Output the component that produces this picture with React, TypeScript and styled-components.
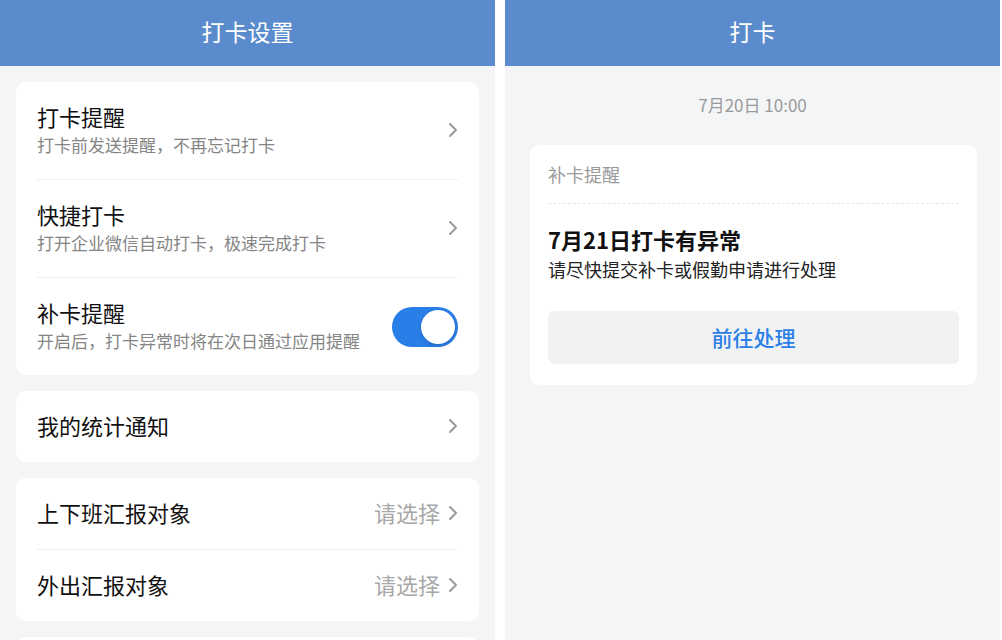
import styled, { createGlobalStyle } from "styled-components";

const GlobalStyle = createGlobalStyle`
  html, body {
    margin: 0;
    padding: 0;
    background: #ffffff;
  }
  body {
    font-family: "Noto Sans CJK SC", "Noto Sans", sans-serif;
    -webkit-font-smoothing: antialiased;
  }
`;

const Page = styled.div`
  display: flex;
  gap: 10px;
  width: 1002px;
  height: 640px;
  overflow: hidden;
`;

const Screen = styled.div`
  width: 495px;
  height: 640px;
  background: #f4f5f7;
  display: flex;
  flex-direction: column;
  overflow: hidden;
`;

const NavBar = styled.div`
  height: 66px;
  box-sizing: border-box;
  padding-bottom: 4px;
  flex-shrink: 0;
  background: #5a8bcc;
  color: #ffffff;
  font-size: 23px;
  display: flex;
  align-items: center;
  justify-content: center;
`;

const SettingsBody = styled.div`
  padding: 16px 16px 0;
  display: flex;
  flex-direction: column;
  gap: 16px;
`;

const Card = styled.div`
  background: #ffffff;
  border-radius: 10px;
  padding: 0 21px;
  flex-shrink: 0;
`;

// text in Noto CJK sits a little low, so the row keeps 4px spare at the bottom
const Row = styled.div<{ h: number }>`
  height: ${(p) => p.h - 4}px;
  padding-bottom: 4px;
  display: flex;
  align-items: center;
  justify-content: space-between;
  & + & {
    border-top: 1px solid #eeeff1;
  }
`;

const RowText = styled.div`
  display: flex;
  flex-direction: column;
  gap: 4px;
`;

const RowTitle = styled.div`
  font-size: 22px;
  color: #111111;
  line-height: 28px;
`;

const RowSub = styled.div`
  font-size: 17px;
  color: #858585;
  line-height: 22px;
`;

const RowRight = styled.div`
  display: flex;
  align-items: center;
  gap: 8px;
  font-size: 22px;
  color: #a8a8a8;
`;

const Switch = styled.div`
  width: 66px;
  height: 40px;
  margin-top: 4px;
  border-radius: 20px;
  background: #2a7ee8;
  position: relative;
  flex-shrink: 0;
  &::after {
    content: "";
    position: absolute;
    right: 3px;
    top: 3px;
    width: 34px;
    height: 34px;
    border-radius: 50%;
    background: #ffffff;
    box-shadow: 0 2px 4px rgba(0, 0, 0, 0.15);
  }
`;

const ChevronIcon = styled.svg`
  flex-shrink: 0;
  margin-top: 3px;
`;

const DateLine = styled.div`
  text-align: center;
  font-size: 17px;
  color: #9a9a9a;
  margin-top: 28px;
  line-height: 22px;
`;

const NoticeCard = styled.div`
  margin: 29px 23px 0 25px;
  background: #ffffff;
  border-radius: 9px;
  padding: 0 18px 21px;
`;

const NoticeHead = styled.div`
  height: 58px;
  display: flex;
  align-items: center;
  font-size: 18px;
  color: #9a9a9a;
  border-bottom: 1px dashed #e6e7e9;
`;

const NoticeTitle = styled.div`
  margin-top: 20px;
  font-size: 22px;
  font-weight: 700;
  color: #111111;
  line-height: 30px;
`;

const NoticeSub = styled.div`
  margin-top: 2px;
  font-size: 18px;
  color: #222222;
  line-height: 26px;
`;

const ActionButton = styled.div`
  margin-top: 29px;
  height: 53px;
  box-sizing: border-box;
  padding-bottom: 2px;
  border-radius: 6px;
  background: #f1f2f3;
  color: #2b7fe6;
  font-size: 21px;
  font-weight: 500;
  display: flex;
  align-items: center;
  justify-content: center;
`;

const Chevron = () => (
  <ChevronIcon width="10" height="16" viewBox="0 0 10 16" fill="none">
    <path d="M2 2l6 6-6 6" stroke="#9b9b9b" strokeWidth="2" strokeLinecap="round" strokeLinejoin="round" />
  </ChevronIcon>
);

const settingsTop = [
  { title: "打卡提醒", sub: "打卡前发送提醒，不再忘记打卡" },
  { title: "快捷打卡", sub: "打开企业微信自动打卡，极速完成打卡" },
];

const reportRows = ["上下班汇报对象", "外出汇报对象"];

export default function App() {
  return (
    <>
      <GlobalStyle />
      <Page>
        <Screen>
          <NavBar>打卡设置</NavBar>
          <SettingsBody>
            <Card>
              {settingsTop.map((r) => (
                <Row h={97} key={r.title}>
                  <RowText>
                    <RowTitle>{r.title}</RowTitle>
                    <RowSub>{r.sub}</RowSub>
                  </RowText>
                  <Chevron />
                </Row>
              ))}
              <Row h={97}>
                <RowText>
                  <RowTitle>补卡提醒</RowTitle>
                  <RowSub>开启后，打卡异常时将在次日通过应用提醒</RowSub>
                </RowText>
                <Switch />
              </Row>
            </Card>
            <Card>
              <Row h={71}>
                <RowTitle>我的统计通知</RowTitle>
                <Chevron />
              </Row>
            </Card>
            <Card>
              {reportRows.map((t) => (
                <Row h={71} key={t}>
                  <RowTitle>{t}</RowTitle>
                  <RowRight>
                    请选择
                    <Chevron />
                  </RowRight>
                </Row>
              ))}
            </Card>
            <Card>
              <Row h={71} />
            </Card>
          </SettingsBody>
        </Screen>
        <Screen>
          <NavBar>打卡</NavBar>
          <DateLine>7月20日 10:00</DateLine>
          <NoticeCard>
            <NoticeHead>补卡提醒</NoticeHead>
            <NoticeTitle>7月21日打卡有异常</NoticeTitle>
            <NoticeSub>请尽快提交补卡或假勤申请进行处理</NoticeSub>
            <ActionButton>前往处理</ActionButton>
          </NoticeCard>
        </Screen>
      </Page>
    </>
  );
}
